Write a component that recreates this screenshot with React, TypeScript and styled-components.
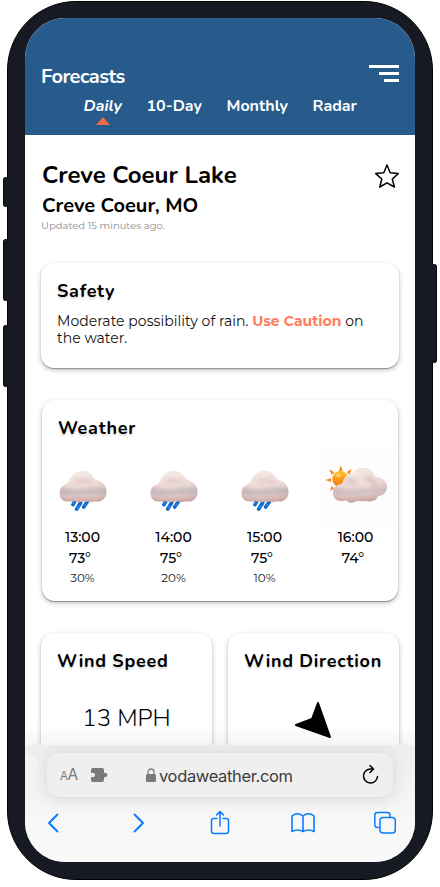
import React from "react";
import styled, { createGlobalStyle } from "styled-components";

const GlobalStyle = createGlobalStyle`
  * { box-sizing: border-box; }
  html, body { margin: 0; background: #fff; }
  h1, h2, h3, p { margin: 0; }
`;

const rounded = `Nunito, "Nunito Sans", Lato, "Open Sans", sans-serif`;
const wide = `Montserrat, Inter, "Liberation Sans", sans-serif`;

const Stage = styled.div`
  width: 440px;
  height: 887px;
  padding: 1px 7px 0;
  position: relative;
  overflow: hidden;
  background: #fff;
`;

const SideButton = styled.div<{ $side: "left" | "right"; $top: number; $height: number }>`
  position: absolute;
  z-index: 1;
  ${(p) => p.$side}: 3px;
  top: ${(p) => p.$top}px;
  width: 8px;
  height: ${(p) => p.$height}px;
  background: #171a22;
  border-${(p) => p.$side}: 1px solid #08090c;
  border-radius: ${(p) => (p.$side === "left" ? "3px 0 0 3px" : "0 3px 3px 0")};
`;

const Phone = styled.div`
  position: relative;
  width: 426px;
  height: 879px;
  padding: 16px 16px;
  background: #171a22;
  border: 1px solid #020203;
  border-radius: 69px;
`;

const Screen = styled.div`
  width: 390px;
  height: 844px;
  margin: 0 1px;
  border-radius: 40px;
  overflow: hidden;
  background: #fff;
  display: flex;
  flex-direction: column;
`;

const Header = styled.header`
  flex: none;
  height: 117px;
  padding: 46px 16px 0;
  background: #275b8b;
  color: #fff;
  font-family: ${rounded};
`;

const HeaderTop = styled.div`
  display: flex;
  justify-content: space-between;
`;

const PageName = styled.div`
  font-size: 20px;
  line-height: 26px;
  height: 24px;
  font-weight: 700;
  letter-spacing: -0.5px;
`;

const Menu = styled.div`
  display: flex;
  flex-direction: column;
  align-items: flex-end;
  gap: 4px;
  padding-top: 1px;
`;

const MenuLine = styled.span<{ $w: number }>`
  width: ${(p) => p.$w}px;
  height: 3px;
  background: #fff;
`;

const Tabs = styled.nav`
  display: flex;
  padding: 8px 0 0 42.5px;
`;

const Tab = styled.div<{ $active?: boolean; $w: number }>`
  width: ${(p) => p.$w}px;
  flex: none;
  font-size: 16px;
  line-height: 20px;
  font-weight: 700;
  white-space: nowrap;
  font-style: ${(p) => (p.$active ? "italic" : "normal")};
`;

const Marker = styled.div`
  width: 0;
  margin: 1px 0 0 12px;
  border: 7px solid transparent;
  border-top: 0;
  border-bottom: 8px solid #ed6b47;
`;

const Content = styled.main`
  flex: 1;
  min-height: 0;
  overflow: hidden;
  padding: 26px 16px 0;
`;

const Place = styled.section`
  display: flex;
  justify-content: space-between;
  height: 102px;
  color: #000;
`;

const Title = styled.h1`
  font: 700 24px/28px ${rounded};
  letter-spacing: 0;
  padding-left: 1px;
`;

const Subtitle = styled.h2`
  font: 700 20px/28px ${rounded};
  margin-top: 3px;
  padding-left: 1px;
`;

const Updated = styled.p`
  font: 400 10px/12px ${wide};
  color: #8c8c8c;
`;

const Card = styled.section<{ $h: number; $inset?: number }>`
  height: ${(p) => p.$h}px;
  margin: 0 ${(p) => p.$inset ?? 0}px;
  padding: 16px;
  border-radius: 13px;
  background: #fff;
  box-shadow: 0 1px 1px rgba(0, 0, 0, 0.3), 0 2px 5px rgba(0, 0, 0, 0.25);
`;

const CardTitle = styled.h3`
  font: 700 18px/24px ${rounded};
  letter-spacing: 0.72px;
  white-space: nowrap;
  color: #000;
  text-shadow: 0 2px 2px rgba(0, 0, 0, 0.15);
`;

const Advice = styled.p`
  margin-top: 10px;
  font: 400 14px/17px ${wide};
  letter-spacing: 0.04px;
  color: #111;
  white-space: nowrap;
  b { color: #ff7d5c; font-weight: 700; }
`;

const Stack = styled.div`
  display: flex;
  flex-direction: column;
  gap: 32px;
`;

const Hours = styled.div`
  display: grid;
  grid-template-columns: repeat(4, 91px);
  margin: 9px 0 0 -20px;
`;

const Hour = styled.div`
  display: flex;
  flex-direction: column;
  align-items: center;
  color: #000;
  font-family: ${wide};
  svg { display: block; width: 75px; height: 75px; margin-bottom: 3px; }
`;

const Time = styled.div`
  font-size: 14px;
  line-height: 21px;
  font-weight: 500;
  margin-right: 2px;
`;

const Temp = styled(Time)`
  margin-right: 7px;
`;

const Chance = styled.div`
  font-size: 12px;
  line-height: 18px;
  margin-right: 2px;
  color: #222;
`;

const Pair = styled.div`
  display: grid;
  grid-template-columns: 1fr 1fr;
  gap: 16px;
`;

const Speed = styled.div`
  margin-top: 30px;
  text-align: center;
  font: 300 24px/30px ${rounded};
  color: #000;
`;

const Arrow = styled.svg`
  display: block;
  margin: 28px 0 0 49px;
`;

const Browser = styled.footer`
  position: relative;
  flex: none;
  height: 117px;
  padding-top: 8px;
  background: linear-gradient(#ededed, #f7f7f7 60%, #f9f9f9);
  &::before {
    content: "";
    position: absolute;
    left: 0;
    right: 0;
    top: -22px;
    height: 22px;
    background: linear-gradient(transparent, rgba(0, 0, 0, 0.04));
  }
`;

const BarRow = styled.div`
  display: flex;
  gap: 9px;
`;

const PreviousTab = styled.div`
  width: 13px;
  height: 44px;
  border-radius: 0 12px 12px 0;
  background: #f3f3f3;
`;

const AddressBar = styled.div`
  width: 346px;
  height: 44px;
  padding: 0 12px 0 13px;
  display: flex;
  align-items: center;
  border-radius: 12px;
  background: #efefef;
  box-shadow: 0 2px 16px rgba(0, 0, 0, 0.13);
  color: #7b7b7b;
`;

const TextSize = styled.span`
  font: 400 15.5px/20px Inter, sans-serif;
  width: 31px;
  letter-spacing: -0.5px;
  small { font-size: 11.5px; }
`;

const Host = styled.div`
  display: flex;
  align-items: center;
  gap: 3px;
  margin-left: 38px;
  flex: 1;
  font: 400 16.5px/22px Inter, sans-serif;
  letter-spacing: -0.35px;
  color: #3c3c3c;
  span { padding-top: 1px; }
`;

const Toolbar = styled.nav`
  display: grid;
  grid-template-columns: 85.5px 81.5px 82.5px 82.5px 28px;
  align-items: center;
  justify-content: start;
  padding: 13px 0 0 14px;
  color: #087cff;
`;

const ToolSlot = styled.span`
  width: 28px;
  display: flex;
  justify-content: center;
`;

const Puff = () => (
  <>
    <radialGradient id="puff" cx="45%" cy="12%" r="100%">
      <stop offset="0" stopColor="#f5e8e4" />
      <stop offset=".45" stopColor="#ecdad6" />
      <stop offset=".75" stopColor="#dac0bd" />
      <stop offset="1" stopColor="#c39f9c" />
    </radialGradient>
    <filter id="soft" filterUnits="userSpaceOnUse" x="0" y="0" width="225" height="225">
      <feGaussianBlur stdDeviation="6" />
    </filter>
    <linearGradient id="sun" x1="0" y1="0" x2="0" y2="1">
      <stop offset="0" stopColor="#ffc02e" />
      <stop offset="1" stopColor="#f7740b" />
    </linearGradient>
  </>
);

const Rain = () => (
  <svg viewBox="0 0 225 225">
    <defs>
      <Puff />
      <clipPath id="rainClip">
        <path d="M64 157C46 156 40 139 43 126C46 111 58 108 68 101C78 80 92 65 112 65C130 66 141 77 149 91C169 97 184 109 184 128C184 149 168 160 150 157C139 160 127 160 119 157C107 161 94 161 85 156C79 158 71 158 64 157Z" />
      </clipPath>
    </defs>
    <g stroke="#0e66c8" strokeWidth="11" strokeLinecap="round">
      <path d="M88 154L81 167M104 161L92 180M126 155L113 174" />
      <path d="M84 160L82 164M99 170L94 177M119 165L116 170" stroke="#2490f4" strokeWidth="4" />
    </g>
    <g clipPath="url(#rainClip)" transform="translate(-2 0)">
      <rect x="40" y="60" width="150" height="104" fill="url(#puff)" />
      <path d="M40 123Q70 132 110 128T188 126" fill="none" stroke="#9498a8" strokeWidth="13" opacity=".5" filter="url(#soft)" />
      <path d="M90 102Q112 86 138 103" fill="none" stroke="#c59f9b" strokeWidth="8" opacity=".5" filter="url(#soft)" />
      <path d="M42 163Q112 156 184 160" fill="none" stroke="#b98682" strokeWidth="8" opacity=".6" filter="url(#soft)" />
    </g>
  </svg>
);

const PartlySunny = () => (
  <svg viewBox="0 0 225 225">
    <defs>
      <Puff />
      <clipPath id="sunClip">
        <path d="M65 155C47 157 39 139 42 125C46 110 60 107 70 103C74 86 85 73 102 73C110 60 123 55 138 57C155 58 164 70 167 84C188 84 204 96 204 114C203 130 191 141 176 142C173 156 156 161 142 155C132 158 121 156 112 156C104 163 88 163 82 154C76 156 70 156 65 155Z" />
      </clipPath>
    </defs>
    <rect width="225" height="225" fill="#fdfdfd" />
    <g fill="#f58a1c">
      <path d="M65 48L71 66H60ZM98 60L91 77L83 69ZM31 61L46 70L38 77ZM19 93L36 88V99ZM33 126L37 112L46 118Z" />
    </g>
    <circle cx="64" cy="90" r="24" fill="url(#sun)" />
    <ellipse cx="58" cy="79" rx="9" ry="5" fill="#ffd77a" opacity=".8" />
    <g clipPath="url(#sunClip)">
      <rect x="38" y="54" width="170" height="110" fill="url(#puff)" />
      <path d="M40 122Q75 132 120 127T206 124" fill="none" stroke="#9498a8" strokeWidth="10" opacity=".4" filter="url(#soft)" />
      <path d="M80 98Q98 91 113 102M138 86Q160 90 172 110" fill="none" stroke="#c59f9b" strokeWidth="8" opacity=".7" filter="url(#soft)" />
      <path d="M42 163Q112 156 190 150" fill="none" stroke="#b98682" strokeWidth="9" opacity=".6" filter="url(#soft)" />
    </g>
  </svg>
);

const hours = [
  { time: "13:00", temp: "73°", chance: "30%", icon: <Rain /> },
  { time: "14:00", temp: "75°", chance: "20%", icon: <Rain /> },
  { time: "15:00", temp: "75°", chance: "10%", icon: <Rain /> },
  { time: "16:00", temp: "74°", chance: "", icon: <PartlySunny /> },
];

const stroke = { fill: "none", stroke: "currentColor", strokeLinecap: "round", strokeLinejoin: "round" } as const;

const Star = styled.svg`
  margin-top: 3px;
`;

export default function App() {
  return (
    <>
      <GlobalStyle />
      <Stage>
        <SideButton $side="left" $top={177} $height={30} />
        <SideButton $side="left" $top={239} $height={62} />
        <SideButton $side="left" $top={325} $height={62} />
        <SideButton $side="right" $top={264} $height={99} />
        <Phone>
          <Screen>
            <Header>
              <HeaderTop>
                <PageName>Forecasts</PageName>
                <Menu>
                  <MenuLine $w={30} />
                  <MenuLine $w={20} />
                  <MenuLine $w={15} />
                </Menu>
              </HeaderTop>
              <Tabs>
                <Tab $active $w={63}>
                  Daily
                  <Marker />
                </Tab>
                <Tab $w={80}>10-Day</Tab>
                <Tab $w={86}>Monthly</Tab>
                <Tab $w={50}>Radar</Tab>
              </Tabs>
            </Header>
            <Content>
              <Place>
                <div>
                  <Title>Creve Coeur Lake</Title>
                  <Subtitle>Creve Coeur, MO</Subtitle>
                  <Updated>Updated 15 minutes ago.</Updated>
                </div>
                <Star width="24" height="24" viewBox="0 0 24 24">
                  <path d="M12 1L15.2 8.8L23.3 9.6L17.3 15L19.4 23L12 18.8L4.8 23L6.8 15L.7 9.6L8.8 8.8Z" {...stroke} strokeWidth="1.5" />
                </Star>
              </Place>
              <Stack>
                <Card $h={105}>
                  <CardTitle>Safety</CardTitle>
                  <Advice>
                    Moderate possibility of rain. <b>Use Caution</b> on
                    <br />
                    the water.
                  </Advice>
                </Card>
                <Card $h={201} $inset={1}>
                  <CardTitle>Weather</CardTitle>
                  <Hours>
                    {hours.map((h) => (
                      <Hour key={h.time}>
                        {h.icon}
                        <Time>{h.time}</Time>
                        <Temp>{h.temp}</Temp>
                        <Chance>{h.chance}</Chance>
                      </Hour>
                    ))}
                  </Hours>
                </Card>
                <Pair>
                  <Card $h={150}>
                    <CardTitle>Wind Speed</CardTitle>
                    <Speed>13 MPH</Speed>
                  </Card>
                  <Card $h={150}>
                    <CardTitle>Wind Direction</CardTitle>
                    <Arrow width="40" height="40" viewBox="0 0 40 40">
                      <path d="M25 2L37 36L3 24L19 18Z" fill="#000" stroke="#000" strokeWidth="2" strokeLinejoin="round" />
                    </Arrow>
                  </Card>
                </Pair>
              </Stack>
            </Content>
            <Browser>
              <BarRow>
                <PreviousTab />
                <AddressBar>
                  <TextSize><small>A</small>A</TextSize>
                  <svg width="17" height="14" viewBox="0 0 17 14">
                    <path d="M2 0H11Q13 0 13 2V5H13.3A2.2 2.2 0 1 1 13.3 9H13V12Q13 14 11 14H2Q0 14 0 12V9H1A2.2 2.2 0 1 0 1 5H0V2Q0 0 2 0Z" fill="#7a7a7a" />
                  </svg>
                  <Host>
                    <svg width="10" height="14" viewBox="0 0 10 14">
                      <path d="M2 7V4a3 3 0 0 1 6 0v3" fill="none" stroke="#7a7a7a" strokeWidth="1.3" />
                      <rect y="6" width="10" height="8" rx="1.5" fill="#7a7a7a" />
                    </svg>
                    <span>vodaweather.com</span>
                  </Host>
                  <svg width="20" height="22" viewBox="0 0 20 22">
                    <path d="M11.5 5H9.5A7 7 0 1 0 16.5 12.5M9 1.5L12.5 5L9 8.5" {...stroke} stroke="#000" strokeWidth="1.5" />
                  </svg>
                </AddressBar>
              </BarRow>
              <Toolbar>
                <ToolSlot><svg width="12" height="26" viewBox="0 0 12 26"><path d="M10.5 4.5L2 13L10.5 21.5" {...stroke} strokeWidth="1.9" /></svg></ToolSlot>
                <ToolSlot><svg width="12" height="26" viewBox="0 0 12 26"><path d="M1.5 4.5L10 13L1.5 21.5" {...stroke} strokeWidth="1.9" /></svg></ToolSlot>
                <ToolSlot><svg width="20" height="26" viewBox="0 0 20 26"><path d="M7 8.5H3.5Q1.5 8.5 1.5 10.5V21Q1.5 23.5 4 23.5H16Q18.5 23.5 18.5 21V10.5Q18.5 8.5 16.5 8.5H13M10 16V2M6.5 5L10 1.5L13.5 5" {...stroke} strokeWidth="1.5" /></svg></ToolSlot>
                <ToolSlot><svg width="24" height="26" viewBox="0 0 24 26"><path d="M12 6V21.500M12 6Q6.5 1.5 1 6V21.5Q6.5 18.5 12 21.500Q17.5 18.5 23 21.5V6Q17.5 1.5 12 6" {...stroke} strokeWidth="1.6" /></svg></ToolSlot>
                <ToolSlot><svg width="22" height="26" viewBox="0 0 22 26"><path d="M5 17.5H3.5Q.8 17.5 .8 14.5V5Q.8 2.5 3.5 2.5H13.5Q16 2.5 16 5V7.5" {...stroke} strokeWidth="1.5" /><rect x="6" y="7.5" width="15.3" height="15.5" rx="3" {...stroke} strokeWidth="1.5" /></svg></ToolSlot>
              </Toolbar>
            </Browser>
          </Screen>
        </Phone>
      </Stage>
    </>
  );
}
